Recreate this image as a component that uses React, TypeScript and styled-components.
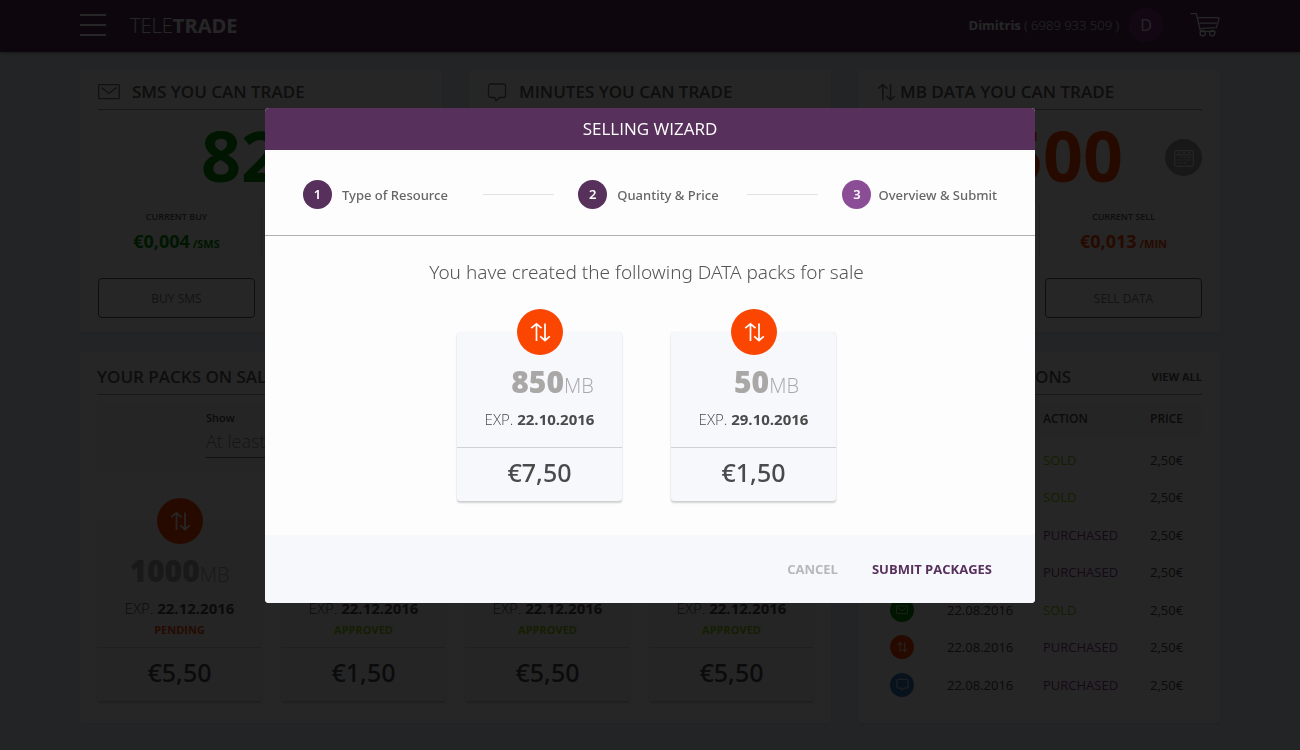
import React from 'react';
import styled, { createGlobalStyle } from 'styled-components';

const purple = '#57305b';
const orange = '#fa4600';
const green = '#009600';
const blue = '#3b78c4';

const GlobalStyle = createGlobalStyle`
  * { box-sizing: border-box; }
  body {
    margin: 0;
    overflow: hidden;
    background: #ecf1f6;
    color: #4a4a4a;
    font-family: "Open Sans", "Noto Sans", sans-serif;
    font-size: 13px;
  }
  h1, h2, p { margin: 0; font-weight: inherit; font-size: inherit; }
  button { font: inherit; color: inherit; background: none; border: 0; padding: 0; cursor: pointer; }
  a { color: inherit; text-decoration: none; }
`;

/* ---------- icons ---------- */

type IconProps = { size?: number };

const DataIcon = ({ size = 22 }: IconProps) => (
  <svg width={size} height={size} viewBox="0 0 22 22" fill="none" stroke="currentColor" strokeWidth="1.7" aria-hidden="true">
    <path d="M7.500 20V2.800M2.200 7.200 7.500 2.800l5 4.400M16 2.500v17M11.200 15.300l4.800 4.200 4.800-4.200" />
  </svg>
);

const MailIcon = ({ size = 22 }: IconProps) => (
  <svg width={size} height={size} viewBox="0 0 22 22" fill="none" stroke="currentColor" strokeWidth="1.3" aria-hidden="true">
    <rect x="0.700" y="3.700" width="20.600" height="14" rx="0.600" />
    <path d="M3.500 6.500 11 12.500l7.500-6" />
  </svg>
);

const ChatIcon = ({ size = 20 }: IconProps) => (
  <svg width={size} height={size} viewBox="0 0 20 20" fill="none" stroke="currentColor" strokeWidth="1.3" strokeLinejoin="round" aria-hidden="true">
    <path d="M3.500 2h13a2 2 0 0 1 2 2v9.500a2 2 0 0 1-2 2h-4L9 18.800l-1.300-3.300H3.500a2 2 0 0 1-2-2V4a2 2 0 0 1 2-2z" />
  </svg>
);

const CalendarIcon = () => (
  <svg width="20" height="18" viewBox="0 0 20 18" fill="none" stroke="currentColor" strokeWidth="1.200" aria-hidden="true">
    <rect x="0.700" y="1.700" width="18.600" height="15.600" rx="1.500" />
    <path d="M1 5.700h18M4 3.600h2M9 3.600h2M14 3.600h2M6.500 8.200h2M9.500 8.200h2M12.500 8.200h4M3.500 11h2M6.500 11h2M9.500 11h2M12.500 11h4M3.500 14h2M6.500 14h2M9.500 14h3" />
  </svg>
);

const CartIcon = () => (
  <svg width="30" height="26" viewBox="0 0 30 26" fill="none" stroke="currentColor" strokeWidth="1.300" strokeLinejoin="round" aria-hidden="true">
    <path d="M.5 1.700h5.800l4.200 17.600h15M8 5.700h20.300a.8.8 0 0 1 .7 1l-2.500 9-16.700 1M9.500 11.200h17.300" />
    <circle cx="12.700" cy="21.200" r="2.600" />
    <circle cx="22.200" cy="21.200" r="2.600" />
  </svg>
);

const MenuIcon = () => (
  <svg width="26" height="22" viewBox="0 0 26 22" stroke="currentColor" strokeWidth="2" aria-hidden="true">
    <path d="M0 1h26M0 11h26M0 21h26" />
  </svg>
);

/* ---------- page header ---------- */

const TopBar = styled.header`
  height: 52px;
  padding: 0 80px 2px;
  display: flex;
  align-items: center;
  background: ${purple};
  color: #fff;
  box-shadow: 0 1px 3px rgba(0, 0, 0, 0.4);
`;

const IconButton = styled.button`
  display: flex;
  align-items: center;
`;

const Brand = styled.a`
  margin-left: 24px;
  margin-right: auto;
  font-size: 20px;
  font-weight: 300;
  b { font-weight: 700; }
`;

const Account = styled.p`
  font-size: 13px;
  font-weight: 300;
  b { font-weight: 700; }
`;

const Avatar = styled.span`
  width: 34px;
  height: 34px;
  margin: 0 27px 0 10px;
  border-radius: 50%;
  display: flex;
  align-items: center;
  justify-content: center;
  background: #7d2f88;
  font-size: 16px;
`;

/* ---------- dashboard ---------- */

const Dashboard = styled.main`
  max-width: 1140px;
  margin: 18px auto 27px;
  display: grid;
  grid-template-columns: repeat(3, minmax(0, 1fr));
  gap: 20px 27px;
`;

const Card = styled.section`
  padding: 8px 18px 14px;
  background: #fdfdfd;
  border-radius: 4px;
  box-shadow: 0 1px 3px rgba(0, 0, 0, 0.1);
`;

const ListCard = styled(Card)<{ $wide?: boolean }>`
  grid-column: span ${(p) => (p.$wide ? 2 : 1)};
  padding: 11px ${(p) => (p.$wide ? 17 : 18)}px 20px;
`;

const CardHead = styled.div<{ $gap?: number }>`
  height: 32px;
  padding-bottom: 4px;
  display: flex;
  align-items: center;
  gap: ${(p) => p.$gap ?? 12}px;
  border-bottom: 1px solid #a0a0a0;
  color: #707070;
`;

const CardTitle = styled.h2`
  flex: 1;
  color: #5c5c5c;
  font-size: 17px;
  font-weight: 600;
`;

const ViewAll = styled.a`
  color: #5c5c5c;
  font-size: 11px;
  font-weight: 700;
`;

const Amount = styled.div<{ $color: string }>`
  height: 95px;
  display: grid;
  grid-template-columns: 37px 1fr 37px;
  align-items: center;
  text-align: center;
  color: ${(p) => p.$color};
  strong {
    grid-column: 2;
    padding-bottom: 4px;
    font-size: 70px;
    font-weight: 700;
    line-height: 91px;
  }
  strong:not(:last-child) { padding-left: 8px; }
`;

const CalendarButton = styled(IconButton)`
  width: 37px;
  height: 37px;
  justify-content: center;
  border-radius: 50%;
  background: #a0a0a0;
  color: #f0f0f0;
`;

const Rates = styled.div`
  display: grid;
  grid-template-columns: 1fr 1fr;
  column-gap: 12px;
  background: linear-gradient(#dcdcdc, #dcdcdc) center top / 1px 52px no-repeat;
`;

const Rate = styled.div<{ $color: string }>`
  height: 54px;
  padding-top: 5px;
  text-align: center;
  color: ${(p) => p.$color};
  font-size: 11px;
  font-weight: 700;
  strong { font-size: 18px; font-weight: 700; line-height: 22px; }
`;

const RateLabel = styled.p`
  height: 20px;
  color: #5c5c5c;
  font-size: 9px;
  font-weight: 600;
`;

const OutlineButton = styled.button`
  height: 40px;
  margin-top: 19px;
  border: 1px solid #606060;
  border-radius: 4px;
  color: #808080;
  font-size: 12px;
`;

const Filter = styled.div`
  height: 70px;
  margin: 7px 0 49px;
  padding: 8px 109px;
  background: #f6f8fc;
  label { display: block; font-size: 11px; font-weight: 600; line-height: 16px; }
`;

const FilterSelect = styled.select`
  width: 160px;
  height: 32px;
  padding: 0 0 2px;
  appearance: none;
  background: none;
  border: 0;
  border-bottom: 1px solid #707070;
  color: #8a8a8a;
  font: 300 18px "Open Sans", sans-serif;
`;

const PackGrid = styled.div`
  display: grid;
  grid-template-columns: repeat(4, minmax(0, 1fr));
  gap: 19px;
`;

/* ---------- pack tile, shared by the dashboard and the wizard ---------- */

const PackTile = styled.article`
  min-width: 165px;
  background: #f6f8fc;
  border-radius: 3px;
  box-shadow: 0 2px 2px rgba(0, 0, 0, 0.18), 0 0 1px rgba(0, 0, 0, 0.12);
  text-align: center;
`;

const Badge = styled.span<{ $color: string; $size: number }>`
  width: ${(p) => p.$size}px;
  height: ${(p) => p.$size}px;
  border-radius: 50%;
  display: flex;
  align-items: center;
  justify-content: center;
  background: ${(p) => p.$color};
  color: #fff;
`;

const PackInfo = styled.div<{ $height: number }>`
  height: ${(p) => p.$height}px;
  display: flex;
  flex-direction: column;
  align-items: center;
  border-bottom: 1px solid #cfd1d4;
  ${Badge} { margin-top: -23px; }
`;

const PackSize = styled.p<{ $indent: number }>`
  padding-left: ${(p) => p.$indent}px;
  margin-top: 4px;
  color: #aaa7a7;
  font-size: 20px;
  font-weight: 300;
  line-height: 46px;
  strong { font-size: 30px; font-weight: 800; }
`;

const PackExpiry = styled.p`
  font-size: 15px;
  font-weight: 300;
  line-height: 20px;
  b { font-weight: 700; }
`;

const PackStatus = styled.p<{ $color: string }>`
  margin-top: 4px;
  color: ${(p) => p.$color};
  font-size: 11px;
  font-weight: 700;
  line-height: 16px;
`;

const PackPrice = styled.p`
  height: 53px;
  font-family: "Noto Sans", sans-serif;
  font-size: 25px;
  font-weight: 500;
  line-height: 48px;
`;

type PackProps = { size: string; expires: string; price: string; status?: string; indent?: number };

const Pack = ({ size, expires, price, status, indent = 0 }: PackProps) => (
  <PackTile>
    <PackInfo $height={status ? 127 : 116}>
      <Badge $color={orange} $size={46}><DataIcon /></Badge>
      <PackSize $indent={indent}><strong>{size}</strong>MB</PackSize>
      <PackExpiry>EXP. <b>{expires}</b></PackExpiry>
      {status && <PackStatus $color={status === 'PENDING' ? orange : '#8cc800'}>{status}</PackStatus>}
    </PackInfo>
    <PackPrice>{price}</PackPrice>
  </PackTile>
);

/* ---------- transactions ---------- */

const History = styled.table`
  width: 100%;
  margin-top: 7px;
  table-layout: fixed;
  border-collapse: collapse;
  text-align: left;
  thead tr { height: 33px; background: #f6f8fc; }
  tbody tr { height: 37px; }
  tbody tr:nth-child(even) { height: 38px; }
  tbody::before { content: ""; display: block; height: 6px; }
  th { padding: 0; font-size: 12px; font-weight: 600; }
  td { padding: 0; }
  th:first-child, td:first-child { padding-left: 14px; }
`;

const Action = styled.td<{ $sold: boolean }>`
  color: ${(p) => (p.$sold ? '#8cc800' : '#8a3f96')};
`;

const transactions = [
  { kind: 'sms', action: 'SOLD' },
  { kind: 'data', action: 'SOLD' },
  { kind: 'data', action: 'PURCHASED' },
  { kind: 'min', action: 'PURCHASED' },
  { kind: 'sms', action: 'SOLD' },
  { kind: 'data', action: 'PURCHASED' },
  { kind: 'min', action: 'PURCHASED' },
];

const kindIcon: Record<string, React.ReactNode> = {
  sms: <Badge $color={green} $size={24}><MailIcon size={12} /></Badge>,
  data: <Badge $color={orange} $size={24}><DataIcon size={12} /></Badge>,
  min: <Badge $color={blue} $size={24}><ChatIcon size={13} /></Badge>,
};

const Footer = styled.footer`
  height: 1px;
  position: relative;
  z-index: 1;
  background: #2e1430;
`;

/* ---------- wizard ---------- */

const Overlay = styled.div`
  position: fixed;
  inset: 0;
  padding: 108px 24px 24px;
  display: flex;
  align-items: flex-start;
  justify-content: center;
  background: rgba(0, 0, 0, 0.85);
`;

const Dialog = styled.div`
  width: 100%;
  max-width: 770px;
  border-radius: 4px;
  overflow: hidden;
  background: #fdfdfd;
`;

const DialogTitle = styled.h1`
  height: 42px;
  background: ${purple};
  color: #fff;
  font-size: 17px;
  line-height: 42px;
  text-align: center;
`;

const Steps = styled.ol`
  height: 86px;
  margin: 0;
  padding: 4px 38px 0;
  list-style: none;
  display: grid;
  grid-template-columns: 275fr 264fr auto;
  align-items: center;
  border-bottom: 1px solid #b0b0b0;
  font-family: "Noto Sans", sans-serif;
`;

const Step = styled.li<{ $current?: boolean }>`
  display: flex;
  align-items: center;
  gap: ${(p) => (p.$current ? 7 : 10)}px;
  color: #666;
  font-weight: 500;
  span {
    width: 29px;
    height: 29px;
    border-radius: 50%;
    background: ${(p) => (p.$current ? '#8b4e96' : purple)};
    color: #fff;
    font-weight: 600;
    line-height: 29px;
    text-align: center;
  }
  &:not(:last-child)::after {
    content: "";
    width: 71px;
    height: 1px;
    margin: 0 24px 0 auto;
    background: #e2e2e2;
  }
`;

const DialogBody = styled.div`
  height: 299px;
  padding: 22px 7px 0 0;
  text-align: center;
`;

const Message = styled.p`
  color: #555;
  font-family: "Noto Sans", sans-serif;
  font-size: 19px;
  font-weight: 300;
  line-height: 28px;
`;

const NewPacks = styled.div`
  margin-top: 46px;
  display: flex;
  justify-content: center;
  gap: 49px;
`;

const DialogFooter = styled.div`
  height: 68px;
  padding-right: 43px;
  display: flex;
  align-items: center;
  justify-content: flex-end;
  gap: 34px;
  background: #f6f8fc;
`;

const TextButton = styled.button<{ $primary?: boolean }>`
  color: ${(p) => (p.$primary ? purple : '#b8b8b8')};
  font-size: 13px;
  font-weight: 700;
`;

type ResourceProps = {
  icon: React.ReactNode; gap?: number; title: string; amount: string; color: string;
  unit: string; name: string; buy: string; sell: string; calendar?: boolean;
};

const Resource = ({ icon, gap, title, amount, color, unit, name, buy, sell, calendar }: ResourceProps) => (
  <Card>
    <CardHead $gap={gap}>{icon}<CardTitle>{title}</CardTitle></CardHead>
    <Amount $color={color}>
      <strong>{amount}</strong>
      {calendar && <CalendarButton aria-label="Expiry dates"><CalendarIcon /></CalendarButton>}
    </Amount>
    <Rates>
      <Rate $color={color}><RateLabel>CURRENT BUY</RateLabel><strong>{buy}</strong> {unit}</Rate>
      <Rate $color={color}><RateLabel>CURRENT SELL</RateLabel><strong>{sell}</strong> {unit}</Rate>
      <OutlineButton>BUY {name}</OutlineButton>
      <OutlineButton>SELL {name}</OutlineButton>
    </Rates>
  </Card>
);

export default function App() {
  return (
    <>
      <GlobalStyle />
      <TopBar>
        <IconButton aria-label="Menu"><MenuIcon /></IconButton>
        <Brand href="#">TELE<b>TRADE</b></Brand>
        <Account><b>Dimitris</b> ( 6989 933 509 )</Account>
        <Avatar>D</Avatar>
        <IconButton aria-label="Cart"><CartIcon /></IconButton>
      </TopBar>

      <Dashboard>
        <Resource icon={<MailIcon />} title="SMS YOU CAN TRADE" amount="820" color={green} unit="/SMS" name="SMS" buy="€0,004" sell="€0,003" />
        <Resource icon={<ChatIcon />} title="MINUTES YOU CAN TRADE" amount="300" color={blue} unit="/MIN" name="MINUTES" buy="€0,014" sell="€0,013" />
        <Resource icon={<DataIcon size={20} />} gap={4} title="MB DATA YOU CAN TRADE" amount="1500" color={orange} unit="/MIN" name="DATA" buy="€0,014" sell="€0,013" calendar />

        <ListCard $wide>
          <CardHead $gap={0}><CardTitle>YOUR PACKS ON SALE</CardTitle></CardHead>
          <Filter>
            <label htmlFor="show">Show</label>
            <FilterSelect id="show"><option>At least 100MB</option></FilterSelect>
          </Filter>
          <PackGrid>
            <Pack size="1000" expires="22.12.2016" status="PENDING" price="€5,50" />
            <Pack size="100" expires="22.12.2016" status="APPROVED" price="€1,50" />
            <Pack size="1000" expires="22.12.2016" status="APPROVED" price="€5,50" />
            <Pack size="1000" expires="22.12.2016" status="APPROVED" price="€5,50" />
          </PackGrid>
        </ListCard>

        <ListCard>
          <CardHead><CardTitle>RECENT TRANSACTIONS</CardTitle><ViewAll href="#">VIEW ALL</ViewAll></CardHead>
          <History>
            <colgroup><col width="71" /><col width="96" /><col width="107" /><col /></colgroup>
            <thead><tr><th>TYPE</th><th>DATE</th><th>ACTION</th><th>PRICE</th></tr></thead>
            <tbody>
              {transactions.map((t, i) => (
                <tr key={i}>
                  <td>{kindIcon[t.kind]}</td>
                  <td>22.08.2016</td>
                  <Action $sold={t.action === 'SOLD'}>{t.action}</Action>
                  <td>2,50€</td>
                </tr>
              ))}
            </tbody>
          </History>
        </ListCard>
      </Dashboard>
      <Footer />

      <Overlay>
        <Dialog role="dialog" aria-modal="true" aria-labelledby="wizard-title">
          <DialogTitle id="wizard-title">SELLING WIZARD</DialogTitle>
          <Steps>
            <Step><span>1</span>Type of Resource</Step>
            <Step><span>2</span>Quantity &amp; Price</Step>
            <Step $current aria-current="step"><span>3</span>Overview &amp; Submit</Step>
          </Steps>
          <DialogBody>
            <Message>You have created the following DATA packs for sale</Message>
            <NewPacks>
              <Pack size="850" expires="22.10.2016" price="€7,50" indent={26} />
              <Pack size="50" expires="29.10.2016" price="€1,50" indent={26} />
            </NewPacks>
          </DialogBody>
          <DialogFooter>
            <TextButton>CANCEL</TextButton>
            <TextButton $primary>SUBMIT PACKAGES</TextButton>
          </DialogFooter>
        </Dialog>
      </Overlay>
    </>
  );
}
